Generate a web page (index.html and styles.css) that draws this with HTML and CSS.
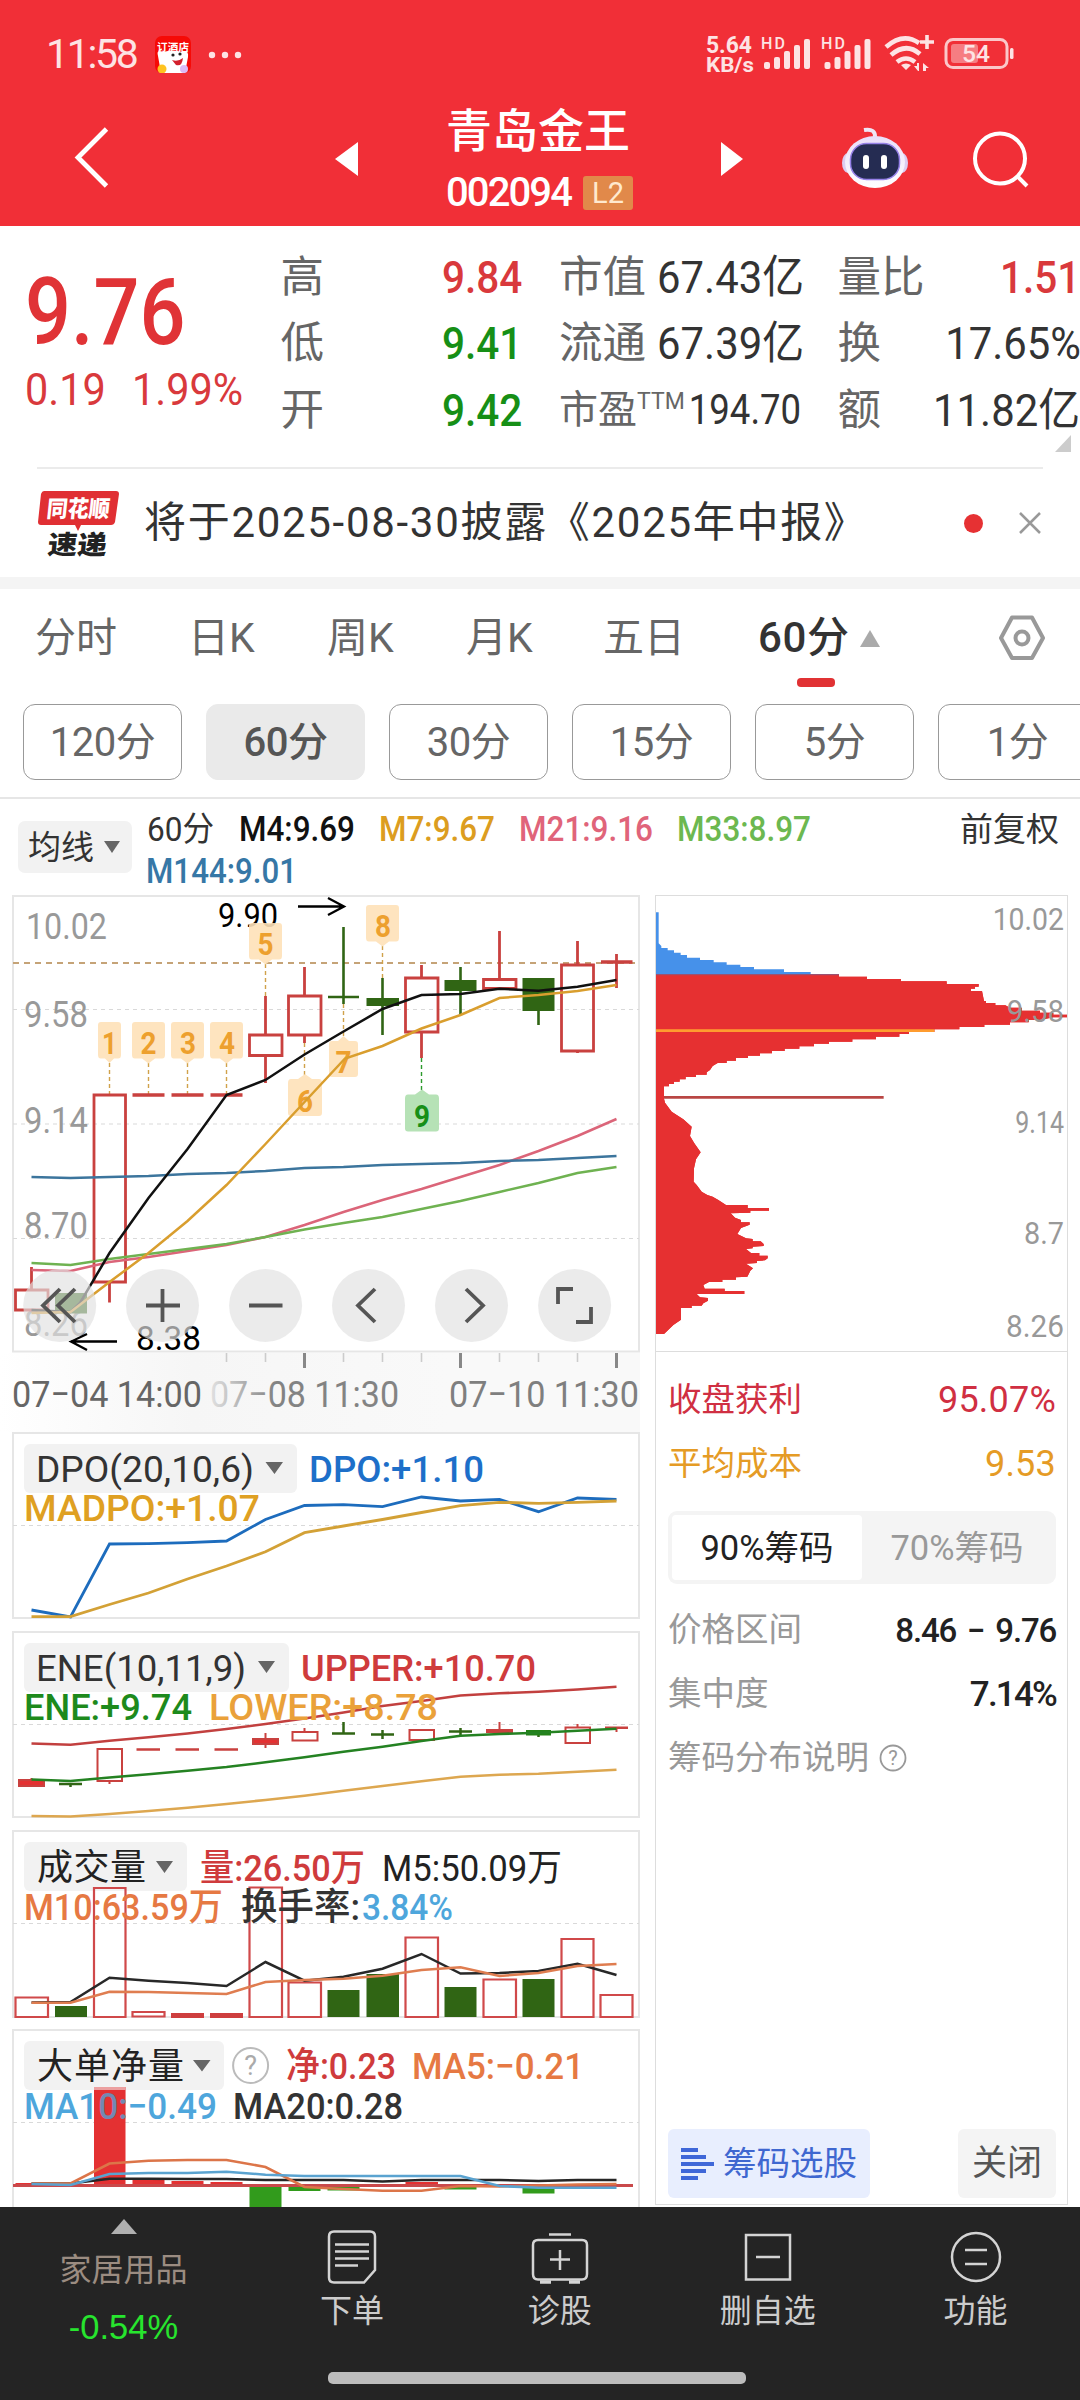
FILE: index.html
```html
<!DOCTYPE html>
<html lang="zh-CN">
<head>
<meta charset="utf-8">
<title>青岛金王 002094</title>
<link rel="stylesheet" href="styles.css">
</head>
<body>
<header class="top">
  <div class="status">
    <span class="clock">11:58</span>
    <svg class="app" width="36" height="37" viewBox="0 0 36 37"><rect width="36" height="37" rx="7" fill="#f60a06"/><text x="2" y="15" font-size="10.5" font-weight="700" textLength="32" fill="#fff">订酒店</text><path d="M3 20Q1 13 8 16Q18 13 27 16Q34 14 33 21L30 37H6Z" fill="#fff"/><circle cx="18" cy="19" r="1.600" fill="#222"/><circle cx="25" cy="18" r="1.600" fill="#222"/><path d="M17 24Q23 26 28 22Q27 31 21 29Z" fill="#d3202c"/><circle cx="7" cy="33" r="4.500" fill="#ffc31f"/><circle cx="29" cy="33" r="4" fill="#dcb9f5"/></svg>
    <svg class="more" width="34" height="8" viewBox="0 0 34 8" fill="#fde3e4"><circle cx="4" cy="4" r="3.2"/><circle cx="17" cy="4" r="3.2"/><circle cx="30" cy="4" r="3.2"/></svg>
    <svg class="signals" width="320" height="44" viewBox="700 34 320 44" fill="#fde3e4">
      <g font-weight="700" font-size="23"><text x="706" y="54" textLength="46" lengthAdjust="spacingAndGlyphs">5.64</text><text x="706" y="73" font-size="21" textLength="48" lengthAdjust="spacingAndGlyphs">KB/s</text></g>
      <g font-size="16" font-weight="500"><text x="761" y="50" textLength="24">HD</text><text x="821" y="50" textLength="24">HD</text></g>
      <g id="bars"><rect x="764" y="63" width="6" height="7" rx="2"/><rect x="774" y="58" width="6" height="12" rx="2"/><rect x="784" y="52" width="6" height="18" rx="2"/><rect x="794" y="46" width="6" height="24" rx="2"/><rect x="804" y="40" width="6" height="30" rx="2"/></g>
      <use href="#bars" x="60.500"/>
      <g fill="none" stroke="#fde3e4" stroke-width="4.600"><path d="M886 48Q903 33 919 44"/><path d="M891 56Q906 43 920 55"/><path d="M897 63Q906 56 915 63"/><path d="M927 36V50M920 43H934" stroke-width="3.600"/></g>
      <path d="M901 66Q906 63 911 66L906 71ZM918 72L914 67H917V64H919V72ZM923 72V64L929 69H926V72Z"/>
      <rect x="946" y="40.500" width="61" height="28" rx="7" fill="none" stroke="#fbc7c9" stroke-width="3"/><rect x="951" y="45" width="27" height="19" rx="3" fill="#f67d82"/><rect x="1010" y="49" width="3.500" height="11" rx="1.500"/>
      <text x="962" y="63" font-size="24" font-weight="500" textLength="28" lengthAdjust="spacingAndGlyphs">54</text>
    </svg>
  </div>
  <div class="bar">
    <svg class="back" width="36" height="64" viewBox="73 126 36 64"><path d="M105.500 129L77 157.500L105.500 186" fill="none" stroke="#fff" stroke-width="4.800"/></svg>
    <svg class="prev" width="23" height="36" viewBox="0 0 23 36"><path d="M23 1V35L0 18Z" fill="#fff"/></svg>
    <div class="title"><h1>青岛金王</h1><p><span class="code">002094</span><b>L2</b></p></div>
    <svg class="next" width="23" height="36" viewBox="0 0 23 36"><path d="M0 1V35L22 18Z" fill="#fff"/></svg>
    <svg class="robot" width="68" height="64" viewBox="841 126 68 64"><defs><linearGradient id="rb" x1="0" y1="0" x2="0" y2="1"><stop offset="0" stop-color="#e9defa"/><stop offset="1" stop-color="#fff"/></linearGradient></defs><path d="M864 130Q876 128 875 138" stroke="#efe6f6" stroke-width="4" fill="none"/><ellipse cx="848" cy="163" rx="6" ry="10" fill="#dccdf2"/><ellipse cx="902" cy="163" rx="6" ry="10" fill="#dccdf2"/><ellipse cx="875" cy="162" rx="30" ry="26" fill="url(#rb)"/><rect x="850.500" y="143.500" width="49" height="36" rx="16" fill="#252c52" stroke="#9681e8" stroke-width="1.500"/><rect x="863" y="155" width="6" height="14" rx="3" fill="#fff"/><rect x="881" y="155" width="6" height="14" rx="3" fill="#fff"/></svg>
    <svg class="search" width="58" height="58" viewBox="972 131 58 58"><circle cx="1000" cy="158.500" r="25" fill="none" stroke="#fff" stroke-width="4"/><path d="M1017 176L1027 186" stroke="#fff" stroke-width="4"/></svg>
  </div>
</header>

<section class="quote">
  <div class="price"><strong class="n">9.76</strong><div><span class="n chg">0.19</span><span class="n">1.99%</span></div></div>
  <dl><div><dt>高</dt><dd class="n up">9.84</dd></div><div><dt>低</dt><dd class="n down">9.41</dd></div><div><dt>开</dt><dd class="n down">9.42</dd></div></dl>
  <dl><div><dt>市值</dt><dd class="n">67.43亿</dd></div><div><dt>流通</dt><dd class="n">67.39亿</dd></div><div><dt class="pe">市盈<sup>TTM</sup></dt><dd class="n sm">194.70</dd></div></dl>
  <dl><div><dt>量比</dt><dd class="n up">1.51</dd></div><div><dt>换</dt><dd class="n">17.65%</dd></div><div><dt>额</dt><dd class="n">11.82亿</dd></div></dl>
  <i class="corner"></i>
</section>

<section class="notice">
  <svg width="84" height="68" viewBox="37 487 84 68"><path d="M44 489H116Q119 489 119 492L115 520Q114 523 111 523H81L78 529L75 523H41Q38 523 38 520L41 492Q42 489 44 489Z" fill="#e02f33"/><g font-weight="900"><text transform="translate(46 515) skewX(-6)" font-size="23" fill="#fff" textLength="63" lengthAdjust="spacingAndGlyphs">同花顺</text><text transform="translate(47 552) skewX(-6)" font-size="26" fill="#222" textLength="59" lengthAdjust="spacingAndGlyphs">速递</text></g></svg>
  <p>将于2025-08-30披露《2025年中报》</p>
  <i class="dot"></i>
  <svg class="x" width="24" height="24" viewBox="0 0 24 24"><path d="M2 2L22 22M22 2L2 22" stroke="#999" stroke-width="2.500"/></svg>
</section>

<nav class="tabs">
  <span>分时</span><span>日K</span><span>周K</span><span>月K</span><span>五日</span><span class="on">60分<i></i></span>
  <svg width="48" height="46" viewBox="998 615 48 46" fill="none" stroke="#999" stroke-width="4"><path d="M1012 617.500H1032L1043 638L1032 658H1012L1001 638Z" stroke-linejoin="round"/><circle cx="1022" cy="638" r="6.500"/></svg>
</nav>
<div class="pills"><span>120分</span><span class="on">60分</span><span>30分</span><span>15分</span><span>5分</span><span>1分</span></div>

<section class="legend">
  <span class="pick">均线<i></i></span>
  <svg width="700" height="97" viewBox="140 799 700 97" font-size="35" font-weight="500" fill="#333">
    <text x="147" y="841" textLength="67" lengthAdjust="spacingAndGlyphs" font-size="34" font-weight="400">60分</text>
    <g fill="#111"><text x="239" y="841" textLength="116" lengthAdjust="spacingAndGlyphs">M4:9.69</text></g>
    <g fill="#dc9d20"><text x="379" y="841" textLength="116" lengthAdjust="spacingAndGlyphs">M7:9.67</text></g>
    <g fill="#e0647a"><text x="519" y="841" textLength="134" lengthAdjust="spacingAndGlyphs">M21:9.16</text></g>
    <g fill="#6cb850"><text x="677" y="841" textLength="134" lengthAdjust="spacingAndGlyphs">M33:8.97</text></g>
    <g fill="#3677a6"><text x="146" y="883" textLength="151" lengthAdjust="spacingAndGlyphs">M144:9.01</text></g>
  </svg>
  <span class="adj">前复权</span>
</section>

<main>
<div class="charts">
<svg width="655" height="1312" viewBox="0 895 655 1312" font-size="37">
  <defs>
    <linearGradient id="axis"><stop offset="0" stop-color="#fff"/><stop offset=".3" stop-color="#f6f6f6"/><stop offset=".7" stop-color="#f9f9f9"/><stop offset="1" stop-color="#f9f9f9"/></linearGradient>
    <linearGradient id="fade" gradientUnits="userSpaceOnUse" x1="208" x2="275" y1="0" y2="0"><stop offset="0" stop-color="#e4e4e4"/><stop offset="1" stop-color="#838383"/></linearGradient>
  </defs>
  <rect x="0" y="1353" width="640" height="79" fill="url(#axis)"/>
  <g fill="#fff" stroke="#e6e6e6" stroke-width="2"><rect x="13" y="896" width="626" height="455.500"/><rect x="13" y="1433" width="626" height="185"/><rect x="13" y="1632" width="626" height="185"/><rect x="13" y="1831" width="626" height="186"/><rect x="13" y="2030" width="626" height="200"/></g>
  <path d="M13 1009.500H639M13 1124H639M13 1238.500H639M13 1525.500H639M13 1724.500H639M13 1923.500H639M13 2122.500H639" stroke="#d9d9d9" stroke-dasharray="4 4"/>
  <path d="M13 963H639" stroke="#c5a377" stroke-width="1.800" stroke-dasharray="6 5"/>

  <!-- price axis -->
  <g fill="#999"><text x="26" y="939" textLength="81" lengthAdjust="spacingAndGlyphs">10.02</text><text x="24" y="1027" textLength="64" lengthAdjust="spacingAndGlyphs">9.58</text><text x="24" y="1133" textLength="64" lengthAdjust="spacingAndGlyphs">9.14</text><text x="24" y="1238" textLength="64" lengthAdjust="spacingAndGlyphs">8.70</text><text x="24" y="1336" textLength="64" lengthAdjust="spacingAndGlyphs">8.26</text></g>
  <g fill="#000" font-size="33"><text x="218" y="927" textLength="60" lengthAdjust="spacingAndGlyphs">9.90</text><text x="136" y="1350" textLength="65" lengthAdjust="spacingAndGlyphs">8.38</text></g>
  <path d="M298 906.500H344M328 898L344 906.500L328 915M117 1341.500H71M87 1334L71 1341.500L87 1350" fill="none" stroke="#000" stroke-width="2.300"/>

  <!-- sequence markers -->
  <g stroke="#d0a24a" stroke-width="1.400" stroke-dasharray="4 3"><path d="M109.500 1063V1094M148.500 1063V1094M187.500 1063V1094M226.500 1063V1094M265.500 964V996M382.500 946V978M304.500 1043V1075M343.500 1004V1037"/><path d="M421.500 1058V1090" stroke="#2c9a2c"/></g>
  <g fill="#fee1b8" fill-opacity=".9">
    <path d="M101 1022H118Q121 1022 121 1025V1055Q121 1058.500 118 1058.500H114L109.500 1063L105 1058.500H101Q98 1058.500 98 1055V1025Q98 1022 101 1022Z"/>
    <path id="tag" d="M135 1022H162Q165 1022 165 1025V1055Q165 1058.500 162 1058.500H155L148.500 1063.500L142 1058.500H135Q132 1058.500 132 1055V1025Q132 1022 135 1022Z"/>
    <use href="#tag" x="39"/><use href="#tag" x="78"/><use href="#tag" x="117" y="-99"/><use href="#tag" x="234" y="-117"/>
    <path id="tagup" d="M291 1116H319Q322 1116 322 1113V1083Q322 1079 319 1079H312L305 1074L298 1079H291Q288 1079 288 1083V1113Q288 1116 291 1116Z"/>
    <path d="M332 1077H355Q358 1077 358 1074V1044Q358 1041 355 1041H349L343.500 1036L338 1041H332Q329 1041 329 1044V1074Q329 1077 332 1077Z"/>
  </g>
  <use href="#tagup" x="117" y="15.500" fill="#b6e2b6"/>
  <g fill="#eda02e" font-size="32" font-weight="700" text-anchor="middle"><text x="109.500" y="1054" textLength="15" lengthAdjust="spacingAndGlyphs">1</text><text x="148.500" y="1054" textLength="16" lengthAdjust="spacingAndGlyphs">2</text><text x="188" y="1054" textLength="16" lengthAdjust="spacingAndGlyphs">3</text><text x="227" y="1054" textLength="16" lengthAdjust="spacingAndGlyphs">4</text><text x="265.500" y="955" textLength="16" lengthAdjust="spacingAndGlyphs">5</text><text x="305" y="1112" textLength="16" lengthAdjust="spacingAndGlyphs">6</text><text x="343.500" y="1073" textLength="16" lengthAdjust="spacingAndGlyphs">7</text><text x="383" y="937" textLength="16" lengthAdjust="spacingAndGlyphs">8</text><text x="422" y="1127" textLength="16" lengthAdjust="spacingAndGlyphs" fill="#178f17">9</text></g>

  <!-- candles -->
  <g fill="none" stroke="#c9413f" stroke-width="2.800">
    <path d="M31.500 1267V1290M109.500 1282V1302.500M265.500 996V1035M265.500 1055V1083M304.500 967V996M304.500 1035V1043M421.500 965V978M421.500 1032V1058M499.500 931V979M577.500 941V965M577.500 1051V1053M616.500 954V988"/>
    <path d="M15.500 1290H48V1310H15.500ZM94 1095H125.500V1282H94ZM249.500 1035H282V1055.500H249.500ZM288.500 996H321V1035H288.500ZM405.500 978H438V1032H405.500ZM483.500 979.500H516V988.500H483.500ZM561.500 965H593.500V1051H561.500Z"/>
    <path d="M132.500 1095H164.500M171.500 1095H203.500M210.500 1095H242.500M601 962H632.500" stroke-width="3.500"/>
  </g>
  <g fill="#306514" stroke="#306514" stroke-width="2.600"><path d="M343.500 927V1004M382.500 978V1035M460.500 967V1014M538.500 978V1025M328 997H359" fill="none"/><path stroke="none" d="M55 1293H87V1313.500H55ZM366.500 998H399V1006H366.500ZM444.500 980H476.500V991H444.500ZM522.500 978H554.500V1011H522.500Z"/></g>

  <!-- moving averages -->
  <g fill="none" stroke-width="2.500">
    <polyline stroke="#db6579" points="31.500,1270 70.500,1271 109.500,1262 148.500,1257 187.500,1251 226.500,1245 265.500,1237 304.500,1225 343.500,1212 382.500,1200 421.500,1189 460.500,1177 499.500,1165 538.500,1151 577.500,1136 616.500,1119"/>
    <polyline stroke="#6fb251" points="31.500,1263 70.500,1265 109.500,1259 148.500,1254 187.500,1249 226.500,1244 265.500,1237 304.500,1229.500 343.500,1223 382.500,1217 421.500,1209 460.500,1201 499.500,1192 538.500,1183 577.500,1173 616.500,1167"/>
    <polyline stroke="#3c759d" points="31.500,1177 70.500,1178 109.500,1177 148.500,1176 187.500,1174 226.500,1173 265.500,1171 304.500,1168 343.500,1167 382.500,1165 421.500,1164 460.500,1163 499.500,1161 538.500,1160 577.500,1158 616.500,1156"/>
    <polyline stroke="#111" points="31.500,1310 70.500,1312 80,1303 109.500,1253 148.500,1198 187.500,1149 226.500,1095 265.500,1080 304.500,1054.500 343.500,1031.500 382.500,1009 421.500,995 460.500,994 499.500,988.700 538.500,990.700 577.500,986.700 616.500,980"/>
    <polyline stroke="#d99e2e" points="31.500,1313 70.500,1312 109.500,1282 148.500,1253 187.500,1221 226.500,1185 265.500,1144 304.500,1102 345,1058.500 382.500,1046 421.500,1028.500 460.500,1015 499.500,998 538.500,995 577.500,991 616.500,985"/>
  </g>

  <!-- zoom and pan buttons -->
  <g fill="#e1e1e1" fill-opacity=".67"><circle cx="59.700" cy="1305.500" r="36.500"/><circle cx="162.500" cy="1305.500" r="36.500"/><circle cx="265.600" cy="1305.500" r="36.500"/><circle cx="368.500" cy="1305.500" r="36.500"/><circle cx="471.500" cy="1305.500" r="36.500"/><circle cx="574.600" cy="1305.500" r="36.500"/></g>
  <path fill="none" stroke="#555" stroke-width="3.800" d="M60 1289L43 1305.500L60 1322M75 1289L58 1305.500L75 1322M146 1305.500H180M162.500 1289V1322M249 1305.500H282.500M375 1289L358 1305.500L375 1322M466 1289L483 1305.500L466 1322M558 1304V1289H573M591 1307V1322H576"/>

  <!-- time axis -->
  <path d="M226.500 1353V1362M265.500 1353V1362M343.500 1353V1362M382.500 1353V1362M421.500 1353V1362M499.500 1353V1362M538.500 1353V1362M577.500 1353V1362" stroke="#ccc" stroke-width="1.600"/><path d="M304.500 1353V1368M460.500 1353V1368M616.500 1353V1368" stroke="#888" stroke-width="3"/>
  <g><text x="12" y="1407" textLength="190" lengthAdjust="spacingAndGlyphs" fill="#666">07−04 14:00</text><text x="210" y="1407" textLength="189" lengthAdjust="spacingAndGlyphs" fill="url(#fade)">07−08 11:30</text><text x="449" y="1407" textLength="190" lengthAdjust="spacingAndGlyphs" fill="#7f7f7f">07−10 11:30</text></g>

  <!-- DPO -->
  <g fill="none" stroke-width="2.800"><polyline stroke="#1d6cbd" points="31.500,1610 70.500,1617 109.500,1544 148.500,1543.700 187.500,1542.700 226.500,1541 265.500,1519.500 304.500,1505.500 343.500,1504.700 382.500,1506.700 421.500,1497 460.500,1501 499.500,1499.300 538.500,1511.700 577.500,1498 616.500,1499.300"/><polyline stroke="#d3a136" points="31.500,1616.700 70.500,1616.700 109.500,1604.500 148.500,1593 187.500,1579 226.500,1566 265.500,1551.700 304.500,1532.700 343.500,1526 382.500,1519.500 421.500,1512.500 460.500,1505.700 499.500,1502.300 538.500,1503.300 577.500,1502.300 616.500,1501"/></g>
  <g fill="#f2f2f2"><rect x="24" y="1444" width="273" height="49" rx="6"/><rect x="24" y="1643" width="265" height="49" rx="6"/></g>
  <g fill="#333"><text x="36" y="1482" textLength="218" lengthAdjust="spacingAndGlyphs">DPO(20,10,6)</text><text x="36" y="1681" textLength="210" lengthAdjust="spacingAndGlyphs">ENE(10,11,9)</text></g>
  <path d="M265.500 1462H283L274.500 1474ZM258 1661H275L266.500 1673Z" fill="#666"/>
  <g font-weight="500"><text x="309" y="1482" textLength="175" lengthAdjust="spacingAndGlyphs" fill="#1d6fc9">DPO:+1.10</text><text x="24" y="1521" textLength="236" lengthAdjust="spacingAndGlyphs" fill="#dfa022">MADPO:+1.07</text></g>

  <!-- ENE -->
  <g fill="none" stroke="#c9413f" stroke-width="2"><path d="M97.500 1749H122V1781H97.500ZM292.500 1732H317.500V1740.500H292.500ZM409.500 1730H434V1740H409.500ZM565.500 1727.500H590V1743H565.500ZM109.500 1781V1784M265.500 1733V1748M304.500 1728V1732M499.500 1722V1731M577.500 1724V1728M616.500 1727V1732M31.500 1778V1780"/><path d="M136.500 1749.500H160M175.500 1749.500H199M214.500 1749.500H238M605 1727.700H628" stroke-width="2.600"/><path d="M19 1780H44V1786H19ZM253 1739H278V1744H253ZM487 1730H512V1732H487Z" fill="#e33132"/></g>
  <path d="M59 1784H82M332 1733.500H355M371 1734.500H394M449 1731.500H472M343.500 1722V1734M382.500 1730V1739M460.500 1728V1735M70.500 1783V1787M538.500 1735V1737" fill="none" stroke="#306514" stroke-width="2.500"/><path d="M526 1730H551V1735.500H526Z" fill="#258218"/>
  <g fill="none" stroke-width="2.600"><polyline stroke="#c2403f" points="31.500,1743.500 70.500,1744.700 109.500,1740.700 148.500,1737.300 187.500,1733.500 226.500,1729 265.500,1724 304.500,1718.500 343.500,1712.500 382.500,1706 421.500,1701 460.500,1695.500 499.500,1693.300 538.500,1691.700 577.500,1689.500 616.500,1686.700"/><polyline stroke="#248222" points="31.500,1779.500 70.500,1781 109.500,1777.500 148.500,1774.300 187.500,1770.700 226.500,1767 265.500,1762.300 304.500,1757.300 343.500,1751.700 382.500,1746.700 421.500,1741 460.500,1735.700 499.500,1734 538.500,1732.700 577.500,1730.700 616.500,1728.700"/><polyline stroke="#dda750" points="31.500,1816 70.500,1816.500 109.500,1814 148.500,1811 187.500,1807.700 226.500,1804 265.500,1800 304.500,1795.700 343.500,1790.700 382.500,1786 421.500,1781.300 460.500,1776.700 499.500,1774.700 538.500,1773.700 577.500,1771.700 616.500,1769.700"/></g>
  <g font-weight="500"><text x="301" y="1681" textLength="235" lengthAdjust="spacingAndGlyphs" fill="#cf3b3c">UPPER:+10.70</text><text x="24" y="1720" textLength="168" lengthAdjust="spacingAndGlyphs" fill="#1d8a1c">ENE:+9.74</text><text x="209" y="1720" textLength="229" lengthAdjust="spacingAndGlyphs" fill="#eaa13a">LOWER:+8.78</text></g>

  <!-- volume -->
  <g fill="#f2f2f2"><rect x="24" y="1842" width="163" height="49" rx="6"/><rect x="24" y="2041" width="200" height="49" rx="6"/></g>
  <g fill="none" stroke="#d0494a" stroke-width="2.200"><path d="M15.500 1997.500H48V2017H15.500ZM94 1888H125.500V2017H94ZM132.500 2012H164.500V2016.500H132.500ZM249.500 1887.500H282V2017H249.500ZM288.500 1982.500H321V2017H288.500ZM405.500 1937.500H438V2017H405.500ZM483.500 1979.500H516V2017H483.500ZM561.500 1939H593.500V2017H561.500ZM600.500 1995H632.500V2017H600.500Z"/></g>
  <path d="M171 2013H204V2018H171ZM210 2013H243V2018H210Z" fill="#ce3e3e"/>
  <path d="M55 2006H87V2017H55ZM327.500 1990H359.500V2017H327.500ZM366.500 1974H399V2017H366.500ZM444.500 1987H476.500V2017H444.500ZM522.500 1979H554.500V2017H522.500Z" fill="#306514"/>
  <g fill="none" stroke-width="2.500"><polyline stroke="#282828" points="31.500,2002.500 70.500,2002 109.500,1977.700 148.500,1980.700 187.500,1983 226.500,1986 265.500,1962 304.500,1980.700 343.500,1976.700 382.500,1968.700 421.500,1954 460.500,1973.500 499.500,1973 538.500,1971 577.500,1963.700 616.500,1975"/><polyline stroke="#df7d50" points="31.500,2002.700 70.500,2002.700 109.500,1991.700 148.500,1992 187.500,1993 226.500,1994 265.500,1982 304.500,1980 343.500,1978.700 382.500,1975.700 421.500,1970 460.500,1967.300 499.500,1976 538.500,1973 577.500,1966 616.500,1964"/></g>
  <g font-weight="500"><text x="37" y="1880" font-size="36" font-weight="400" textLength="109" fill="#222">成交量</text><text x="200" y="1881" textLength="165" lengthAdjust="spacingAndGlyphs" fill="#cf3b3c">量:26.50万</text><text x="382" y="1881" textLength="180" lengthAdjust="spacingAndGlyphs" font-weight="400" fill="#222">M5:50.09万</text><text x="24" y="1920" textLength="199" lengthAdjust="spacingAndGlyphs" fill="#e67943">M10:63.59万</text><text x="241" y="1920" textLength="119" lengthAdjust="spacingAndGlyphs" fill="#333">换手率:</text><text x="362" y="1920" textLength="91" lengthAdjust="spacingAndGlyphs" fill="#4ea6dc">3.84%</text></g>
  <path d="M156 1861H173L164.500 1873ZM193 2060H210.500L202 2071.500Z" fill="#666"/>

  <!-- net large orders -->
  <path d="M94 2087H125.500V2185H94ZM132.500 2178H164.500V2185H132.500ZM171.500 2181H203.500V2185H171.500ZM210.500 2182H242.500V2185H210.500ZM405.500 2182H438V2185H405.500ZM15.500 2183H48V2186H15.500Z" fill="#e43132"/><rect x="94" y="2087" width="31.500" height="3" fill="#eca0a0"/>
  <path d="M249.500 2187H281.500V2207H249.500ZM288.500 2187H320.500V2191H288.500ZM327.500 2187H359.500V2190.500H327.500ZM444.500 2187H476.500V2189.500H444.500ZM522.500 2187H554.500V2193.500H522.500Z" fill="#329b1c"/>
  <path d="M13 2185.500H633" stroke="#c9494b" stroke-width="3"/>
  <g fill="none" stroke-width="2.600"><polyline stroke="#262626" points="31.500,2183.500 70.500,2183.500 109.500,2178.700 148.500,2178.700 187.500,2179 226.500,2179 265.500,2180 304.500,2180 343.500,2180 382.500,2181.500 421.500,2180 460.500,2180 499.500,2180 538.500,2181 577.500,2180 616.500,2180"/><polyline stroke="#dc7549" points="31.500,2183.500 70.500,2183.500 109.500,2163.500 148.500,2160.700 187.500,2160 226.500,2160 265.500,2167 304.500,2187 343.500,2189 382.500,2190.700 421.500,2190.700 460.500,2186 499.500,2186.500 538.500,2185.500 577.500,2184.500 616.500,2184"/><polyline stroke="#5aa3d0" points="31.500,2184 70.500,2185 109.500,2174 148.500,2173 187.500,2173 226.500,2171.700 265.500,2174.700 304.500,2176 343.500,2176 382.500,2176 421.500,2176 460.500,2176 499.500,2186 538.500,2187.700 577.500,2187.700 616.500,2187.700"/></g>
  <circle cx="250.600" cy="2065.500" r="17.500" fill="none" stroke="#bbb" stroke-width="2"/><text x="250.600" y="2075" font-size="27" fill="#aaa" text-anchor="middle">?</text>
  <g font-weight="500"><text x="37" y="2079" font-size="36" font-weight="400" textLength="147" fill="#222">大单净量</text><text x="286" y="2079" textLength="110" lengthAdjust="spacingAndGlyphs" fill="#cf3b3c">净:0.23</text><text x="412" y="2079" textLength="172" lengthAdjust="spacingAndGlyphs" fill="#e67943">MA5:−0.21</text><text x="24" y="2119" textLength="193" lengthAdjust="spacingAndGlyphs" fill="#4ea6dc">MA10:−0.49</text><text x="233" y="2119" textLength="170" lengthAdjust="spacingAndGlyphs" fill="#333">MA20:0.28</text></g>
  <path d="M94 2090H125.500V2119H94Z" fill="#e43132" fill-opacity=".25"/>
</svg>
</div>

<aside class="chips">
  <svg width="411" height="455" viewBox="48 48 1233 1365" font-size="92" fill="#999">
    <defs><pattern id="rows" width="10" height="15" patternUnits="userSpaceOnUse"><path d="M0 1H10" stroke="#fff" stroke-opacity=".12" stroke-width="2"/></pattern></defs>
    <path fill="#4691ea" d="M48 97H56V190L64 198V204H83V211H102V218H122V225H141V233H180V240H221V247H260V254H301V261H342V268H432V276H512V284H48Z"/>
    <path id="hist" fill="#e63031" d="M48 284H597V290H681V297H783V304H920V312H1016V320H1005V326H993V333H1026L1032 363H1038V369H1066V376H1096L1110 383H1145V392H1200V398H1240V404H1281V412H1240L1200 420H1166V427H1110V434H1033V441H958V448H883V456H807V462H778V470H708V478H637V485H567V491H522V499H478V506H434V513H396V520H360V527H324V534H288V542H260V549H233L218 558L210 570L200 577V584H168V591H137V598H119V605H102V612H87V619H72V656L75 668L95 695L130 718L155 740L150 768L163 790L182 817L168 838L162 865L161 905L170 915L185 935L202 945L218 950L235 960L258 975H323V984H387V992H331V998L272 1000L285 1013L303 1020V1027H329V1034L303 1044L292 1062L318 1075L338 1077V1084H362L371 1092V1098L338 1100V1105L318 1107L333 1119H358V1127H383V1135L375 1141L351 1143V1149L318 1151L339 1165L331 1172L322 1190L288 1192V1199H247V1206H207L190 1215L194 1226H254V1233H313V1242H170L180 1252L204 1254V1262L190 1270L185 1277H155V1284H123V1319L100 1335L72 1362H48Z"/>
    <use href="#hist" style="fill:url(#rows)"/>
    <path d="M48 284H597" stroke="#9b5272" stroke-width="4"/><path d="M48 452H883" stroke="#ff9c2f" stroke-width="8"/><path d="M72 652H731" stroke="#b94644" stroke-width="8"/>
    <g text-anchor="end"><text x="1272" y="151" textLength="214" lengthAdjust="spacingAndGlyphs">10.02</text><text x="1272" y="427" textLength="172" lengthAdjust="spacingAndGlyphs">9.58</text><text x="1272" y="760" textLength="146" lengthAdjust="spacingAndGlyphs">9.14</text><text x="1272" y="1092" textLength="120" lengthAdjust="spacingAndGlyphs">8.7</text><text x="1272" y="1372" textLength="174" lengthAdjust="spacingAndGlyphs">8.26</text></g>
  </svg>
  <div class="info">
    <div class="row rise"><span>收盘获利</span><b>95.07%</b></div>
    <div class="row cost"><span>平均成本</span><b>9.53</b></div>
    <div class="toggle"><span class="on">90%筹码</span><span>70%筹码</span></div>
    <div class="row"><span>价格区间</span><b class="range">8.46 − 9.76</b></div>
    <div class="row"><span>集中度</span><b class="focus">7.14%</b></div>
    <div class="row help"><span>筹码分布说明</span><svg width="28" height="28" viewBox="0 0 28 28"><circle cx="14" cy="14" r="12.500" fill="none" stroke="#999" stroke-width="1.800"/><text x="14" y="21" font-size="20" fill="#999" text-anchor="middle">?</text></svg></div>
    <div class="actions"><span class="pickstock"><svg width="33" height="32" viewBox="0 0 33 32" fill="#3f67d8"><path d="M0 0H17V4H0ZM0 7H25V11H0ZM0 14H33V18H0ZM0 21H25V25H0ZM0 28H17V32H0Z"/></svg>筹码选股</span><span class="close">关闭</span></div>
  </div>
</aside>
</main>

<footer>
  <div class="items">
    <div class="sector"><i></i><span>家居用品</span><b>-0.54%</b></div>
    <div><svg viewBox="326 2228 52 58"><path d="M334 2231.500H370Q375 2231.500 375 2236.500V2270L364 2282.500H334Q329 2282.500 329 2277.500V2236.500Q329 2231.500 334 2231.500ZM335 2244.500H369M335 2251.500H369M335 2258.500H369M335 2265.500H358"/></svg><span>下单</span></div>
    <div><svg viewBox="530 2228 60 58"><path d="M549 2234.500H571M538 2240H582Q587 2240 587 2245V2274Q587 2279.500 582 2279.500H538Q533 2279.500 533 2274V2245Q533 2240 538 2240ZM550 2259.500H570M560 2250V2270"/><path d="M540 2282H551M569 2282H580" stroke-width="3.500"/></svg><span>诊股</span></div>
    <div><svg viewBox="742 2228 52 58"><path d="M746 2235H790V2279.500H746ZM756 2257H780"/></svg><span>删自选</span></div>
    <div><svg viewBox="950 2228 52 58"><circle cx="976" cy="2257" r="24"/><path d="M965 2250H987M965 2264H987"/></svg><span>功能</span></div>
  </div>
  <i class="home"></i>
</footer>
</body>
</html>
```
FILE: styles.css
```css
* { box-sizing: border-box; margin: 0; padding: 0; }
body { width: 1080px; height: 2400px; overflow: hidden; background: #fff; color: #333; font-family: Roboto, "Noto Sans CJK SC", sans-serif; line-height: 1; }
svg { display: block; flex: none; font-family: Roboto, "Noto Sans CJK SC", sans-serif; }
i { font-style: normal; }
b { font-weight: 400; }

.top { height: 226px; background: #f12f37; color: #fff; }
.status { height: 104px; padding: 5px 60px 0 46px; display: flex; align-items: center; color: #fde3e4; }
.clock { width: 109px; font-size: 41px; letter-spacing: -2.3px; }
.more { margin-left: 17px; }
.signals { margin-left: auto; }
.bar { display: flex; height: 122px; align-items: flex-start; }
.back { margin: 22px 0 0 74px; }
.prev { margin: 37px 0 0 225px; }
.title { width: 188px; margin-left: 88px; }
.title h1 { font-size: 46px; font-weight: 500; line-height: 54px; height: 50px; white-space: nowrap; }
.title p { display: flex; align-items: center; margin-top: 19px; height: 40px; }
.code { width: 137px; font-size: 40px; font-weight: 500; letter-spacing: -1.9px; }
.title b { flex: none; width: 50px; height: 34px; background: #e1894a; border-radius: 3px; font-size: 29px; line-height: 35px; text-align: center; color: #ffe9ce; }
.next { margin: 37px 0 0 87px; }
.robot { margin: 22px 0 0 97px; }
.search { margin: 27px 0 0 63px; }

.quote { position: relative; height: 241px; padding: 18px 0 0 25px; display: grid; grid-template-columns: 219px 242px 242px 243px; gap: 36.500px; }
.price { color: #e03336; white-space: nowrap; }
.price strong { display: block; font-size: 93px; font-weight: 500; margin-top: 22px; transform: scaleX(.87); transform-origin: left; height: 93px; }
.price div { display: flex; margin-top: 8px; font-size: 45px; color: #d9393c; }
.price div .n { transform: scaleX(.92); transform-origin: left; width: 107px; }
.quote dl > div { height: 66.500px; display: flex; align-items: center; justify-content: space-between; white-space: nowrap; }
.quote dt { font-size: 43.500px; color: #666; }
.quote dd { font-size: 45px; color: #333; }
.quote dd.n { transform: scaleX(.93); transform-origin: right; }
.quote dd.up { color: #d9393c; font-weight: 500; transform: scaleX(.9); }
.quote dd.down { color: #168f16; font-weight: 500; transform: scaleX(.9); }
.quote dd.sm { font-size: 42px; transform: scaleX(.87); }
.quote .pe { font-size: 39px; width: 90px; }
.quote sup { font-size: 23px; vertical-align: 14px; }
.corner { position: absolute; right: 9px; bottom: 15px; border-left: 16px solid transparent; border-bottom: 17px solid #ccc; }

.notice { height: 122px; margin: 0 37px; border-top: 2px solid #ebebeb; padding-bottom: 12px; display: flex; align-items: center; }
.notice p { width: 803px; margin-left: 23px; font-size: 42px; white-space: nowrap; letter-spacing: 1.700px; }
.dot { width: 19px; height: 19px; border-radius: 50%; background: #e63133; margin: 0 35px 0 17px; flex: none; }

.tabs { height: 115px; margin-top: -12px; border-top: 12px solid #f4f4f4; padding-left: 35px; display: flex; font-size: 41px; color: #666; line-height: 98px; }
.tabs span { white-space: nowrap; flex: none; width: 139px; }
.tabs span:nth-child(1) { width: 153px; }
.tabs span:nth-child(4) { width: 137px; }
.tabs span:nth-child(5) { width: 155px; }
.tabs .on { width: 240px; color: #333; font-weight: 500; position: relative; font-size: 42px; letter-spacing: .6px; }
.tabs .on::after { content: ""; position: absolute; left: 39px; top: 89px; width: 38px; height: 9px; border-radius: 4px; background: #e13234; }
.tabs .on i { display: inline-block; margin-left: 10px; vertical-align: 5px; border: 10px solid transparent; border-top: 0; border-bottom: 17px solid #aaa; }
.tabs svg { margin-top: 26px; }

.pills { height: 107px; padding: 12px 0 0 23px; display: flex; gap: 24px; overflow: hidden; border-bottom: 2px solid #e6e6e6; }
.pills span { flex: none; width: 159px; height: 76px; border: 1.500px solid #999; border-radius: 12px; text-align: center; line-height: 76px; font-size: 40px; color: #666; letter-spacing: -.5px; }
.pills .on { background: #eaeaea; border-color: #eaeaea; font-weight: 500; color: #555; }

.legend { height: 96px; padding-left: 18px; display: flex; align-items: flex-start; }
.pick { display: flex; align-items: center; flex: none; width: 114px; height: 52px; margin-top: 22px; padding-left: 10px; border-radius: 7px; background: #f2f2f2; font-size: 33px; white-space: nowrap; }
.pick i { margin-left: 10px; border: 8.500px solid transparent; border-top: 12px solid #666; border-bottom: 0; }
.legend svg { margin-left: 8px; }
.adj { margin: 14px 0 0 120px; font-size: 33px; white-space: nowrap; }

main { height: 1312px; display: flex; }
.charts { width: 655px; overflow: hidden; }
.chips { width: 413px; height: 1310px; border: 1px solid #ddd; display: flex; flex-direction: column; }
.info { flex: 1; border-top: 1px solid #ddd; padding: 16px 11px 0 12px; display: flex; flex-direction: column; }
.row { height: 64px; display: flex; justify-content: space-between; align-items: center; font-size: 33.500px; color: #999; white-space: nowrap; }
.row b { color: #222; font-size: 36px; letter-spacing: .2px; }
.row.rise, .rise b { color: #d02f42; }
.row.cost, .cost b { color: #e59b25; }
.row .range { font-size: 33px; font-weight: 500; letter-spacing: -1.200px; word-spacing: 4px; }
.row .focus { font-size: 35px; letter-spacing: -1.800px; font-weight: 500; }
.toggle { height: 73px; margin: 15px 0 14px; padding: 4px; border-radius: 9px; background: #f4f4f4; display: flex; }
.toggle span { flex: 1; text-align: center; line-height: 66px; font-size: 34.500px; color: #999; border-radius: 4px; }
.toggle .on { background: #fff; color: #222; }
.help { justify-content: flex-start; gap: 10px; }
.actions { margin-top: auto; margin-bottom: 6px; display: flex; justify-content: space-between; }
.actions span { height: 69px; border-radius: 6px; display: flex; align-items: center; justify-content: center; white-space: nowrap; }
.pickstock { width: 202px; gap: 9px; background: #e8eefe; color: #3f67d0; font-size: 33.500px; }
.close { width: 98px; background: #f4f4f4; color: #555; font-size: 35px; }

footer { height: 193px; background: #242424; color: #ccc; }
.items { display: flex; height: 165px; padding-left: 20px; }
.items > div { width: 207.900px; display: flex; flex-direction: column; align-items: center; font-size: 32px; white-space: nowrap; }
.items svg { width: auto; height: 58px; margin-top: 21px; fill: none; stroke: #d4d4d4; stroke-width: 2.500; }
.items span { margin-top: 9px; }
.items .sector { width: 207px; margin-right: 21px; }
.items .sector i { border: 13px solid transparent; border-top: 0; border-bottom: 15px solid #b0b0b0; margin-top: 12px; }
.items .sector span { color: #9b8c81; margin-top: 20px; }
.items .sector b { font-family: "Liberation Sans", sans-serif; color: #27e52e; font-size: 34.500px; margin-top: 24px; }
.home { display: block; width: 418px; height: 12px; margin-left: 328px; border-radius: 5px; background: #bdbdbd; }
```
